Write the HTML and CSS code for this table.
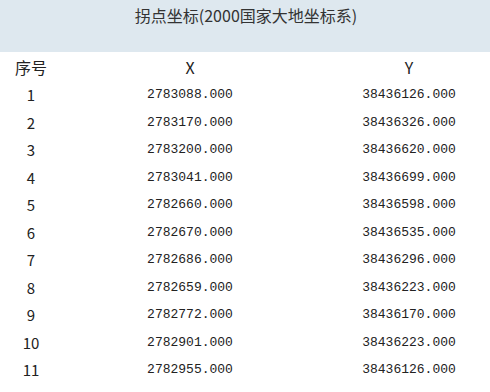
FILE: index.html
```html
<!DOCTYPE html>
<html lang="zh">
<head>
<meta charset="utf-8">
<title>拐点坐标</title>
<link rel="stylesheet" href="styles.css">
</head>
<body>
<div class="panel">
  <div class="title">拐点坐标(2000国家大地坐标系)</div>
  <table class="coords">
    <colgroup><col class="c-idx"><col class="c-x"><col class="c-y"></colgroup>
    <thead>
      <tr><th>序号</th><th>X</th><th class="ycol">Y</th></tr>
    </thead>
    <tbody>
      <tr><td class="idx">1</td><td class="num">2783088.000</td><td class="num ycol">38436126.000</td></tr>
      <tr><td class="idx">2</td><td class="num">2783170.000</td><td class="num ycol">38436326.000</td></tr>
      <tr><td class="idx">3</td><td class="num">2783200.000</td><td class="num ycol">38436620.000</td></tr>
      <tr><td class="idx">4</td><td class="num">2783041.000</td><td class="num ycol">38436699.000</td></tr>
      <tr><td class="idx">5</td><td class="num">2782660.000</td><td class="num ycol">38436598.000</td></tr>
      <tr><td class="idx">6</td><td class="num">2782670.000</td><td class="num ycol">38436535.000</td></tr>
      <tr><td class="idx">7</td><td class="num">2782686.000</td><td class="num ycol">38436296.000</td></tr>
      <tr><td class="idx">8</td><td class="num">2782659.000</td><td class="num ycol">38436223.000</td></tr>
      <tr><td class="idx">9</td><td class="num">2782772.000</td><td class="num ycol">38436170.000</td></tr>
      <tr><td class="idx">10</td><td class="num">2782901.000</td><td class="num ycol">38436223.000</td></tr>
      <tr><td class="idx">11</td><td class="num">2782955.000</td><td class="num ycol">38436126.000</td></tr>
    </tbody>
  </table>
</div>
</body>
</html>
```
FILE: styles.css
```css
html, body {
  margin: 0;
  padding: 0;
  background: #ffffff;
}
body {
  font-family: "Noto Sans CJK SC", "Noto Sans", sans-serif;
  color: #222;
}
.panel {
  width: 490px;
}
.title {
  height: 52px;
  background: #dee8ef;
  text-align: center;
  font-size: 16px;
  line-height: 31px;
  color: #333;
  padding-left: 2px;
}
.coords {
  width: 490px;
  border-collapse: collapse;
  table-layout: fixed;
}
.c-idx { width: 62px; }
.c-x { width: 256px; }
.c-y { width: 172px; }
.coords th {
  font-weight: normal;
  font-size: 16px;
  height: 29px;
  padding: 0;
  text-align: center;
  color: #222;
}
.coords td {
  height: 27.5px;
  padding: 0;
  text-align: center;
}
.coords .ycol {
  padding-left: 10px;
}
.idx {
  font-size: 15px;
  color: #222;
}
.num {
  font-family: "Liberation Mono", monospace;
  font-size: 13px;
  color: #222;
}
```
